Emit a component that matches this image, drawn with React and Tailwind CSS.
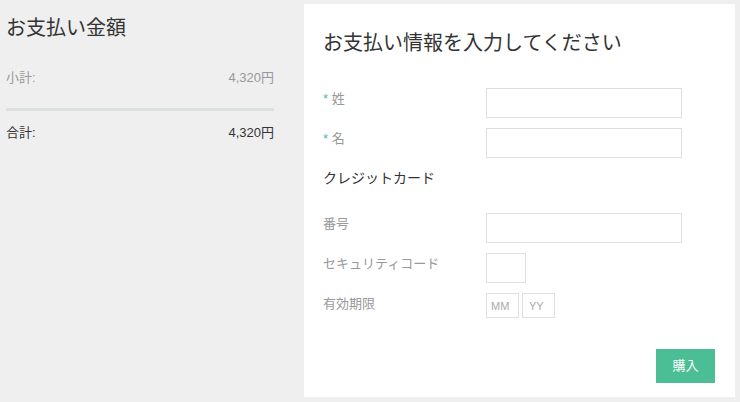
export default function App() {
  const font = { fontFamily: '"Liberation Sans", "Noto Sans CJK JP", sans-serif' };
  return (
    <div className="w-[740px] h-[402px] bg-[#efefef] flex text-[#333]" style={font}>
      <div className="w-[304px] pl-[6px] pr-[30px] pt-[14px]">
        <h2 className="text-[20px] leading-[28px]">お支払い金額</h2>
        <div className="flex justify-between text-[13px] text-[#999] mt-[26px] leading-[20px]">
          <span>小計:</span>
          <span>4,320円</span>
        </div>
        <div className="h-[3px] bg-[#dde0e0] mt-[20px]" />
        <div className="flex justify-between text-[13px] mt-[12px] leading-[20px]">
          <span>合計:</span>
          <span>4,320円</span>
        </div>
      </div>
      <div className="mt-[4px] mb-[5px] w-[431px] bg-white pl-[19px] pr-[20px] pt-[25px]">
        <h2 className="text-[20px] leading-[28px]">お支払い情報を入力してください</h2>
        <div className="mt-[31px] flex flex-col gap-[10px] text-[13px] text-[#999]">
          <Row label={<><span className="text-[#4cbe96]">*</span> 姓</>}><input className="w-[196px] h-[30px] border border-[#dde0e0]" /></Row>
          <Row label={<><span className="text-[#4cbe96]">*</span> 名</>}><input className="w-[196px] h-[30px] border border-[#dde0e0]" /></Row>
        </div>
        <div className="text-[14px] mt-[10px] leading-[20px]">クレジットカード</div>
        <div className="mt-[25px] flex flex-col gap-[10px] text-[13px] text-[#999]">
          <Row label="番号"><input className="w-[196px] h-[30px] border border-[#dde0e0]" /></Row>
          <Row label="セキュリティコード"><input className="w-[40px] h-[30px] border border-[#dde0e0]" /></Row>
          <Row label="有効期限">
            <div className="flex gap-[3px]">
              <input placeholder="MM" className="w-[33px] h-[25px] border border-[#dde0e0] text-[11px] px-[4px] placeholder:text-[#aaa]" />
              <input placeholder="YY" className="w-[33px] h-[25px] border border-[#dde0e0] text-[11px] px-[6px] placeholder:text-[#aaa]" />
            </div>
          </Row>
        </div>
        <div className="flex justify-end mt-[31px]">
          <button className="w-[59px] h-[34px] bg-[#4cbe96] text-white text-[13px]">購入</button>
        </div>
      </div>
    </div>
  );
}

function Row({ label, children }) {
  return (
    <div className="flex items-start">
      <div className="w-[163px] leading-[18px] pt-[2px]">{label}</div>
      {children}
    </div>
  );
}
